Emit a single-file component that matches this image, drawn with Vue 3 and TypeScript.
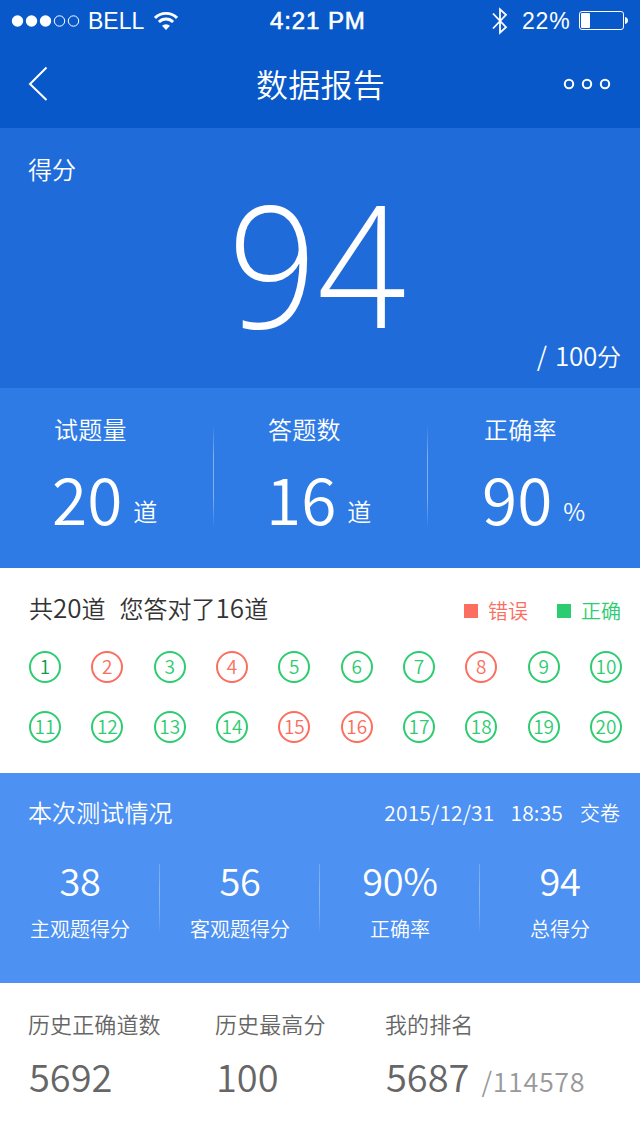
<script setup lang="ts">
interface Answer { n: number; wrong: boolean }
const wrongOnes = [2, 4, 8, 15, 16]
const answers: Answer[] = Array.from({ length: 20 }, (_, i) => ({ n: i + 1, wrong: wrongOnes.includes(i + 1) }))
const totals = [
  { label: '试题量', value: '20', unit: '道' },
  { label: '答题数', value: '16', unit: '道' },
  { label: '正确率', value: '90', unit: '%' },
]
const results = [
  { value: '38', label: '主观题得分' },
  { value: '56', label: '客观题得分' },
  { value: '90%', label: '正确率' },
  { value: '94', label: '总得分' },
]
const history = [
  { label: '历史正确道数', value: '5692', extra: '' },
  { label: '历史最高分', value: '100', extra: '' },
  { label: '我的排名', value: '5687', extra: '/114578' },
]
</script>

<template>
  <main class="screen">
    <header class="top">
      <div class="status">
        <svg class="signal" width="70" height="14" viewBox="0 0 70 14">
          <g fill="#fff"><circle cx="6.500" cy="7" r="5.700" /><circle cx="20.500" cy="7" r="5.700" /><circle cx="34.500" cy="7" r="5.700" /></g>
          <g fill="none" stroke="#fff" stroke-width="1"><circle cx="48.500" cy="7" r="5.200" /><circle cx="62.500" cy="7" r="5.200" /></g>
        </svg>
        <span class="carrier">BELL</span>
        <svg class="wifi" width="24" height="20" viewBox="0 0 24 20">
          <g fill="none" stroke="#fff" stroke-width="2.900">
            <path d="M1 6.900a15.600 15.600 0 0 1 22 0" /><path d="M4.900 10.900a10 10 0 0 1 14.200 0" />
          </g>
          <path d="M12 19l-4-4.200a5.800 5.800 0 0 1 8 0z" fill="#fff" />
        </svg>
        <span class="time">4:21 PM</span>
        <svg class="bt" width="16" height="28" viewBox="0 0 16 28">
          <path d="M1 6.500l13 13.600-6 5.600V2.300l6 5.600L1 21.500" fill="none" stroke="#fff" stroke-width="1.800" />
        </svg>
        <span class="percent">22%</span>
        <svg class="battery" width="50" height="20" viewBox="0 0 50 20">
          <rect x=".5" y=".5" width="44" height="18" rx="2.500" fill="none" stroke="#fff" />
          <rect x="2" y="2" width="9" height="15" rx="1" fill="#fff" />
          <path d="M46 6q3 .8 3 3.500T46 13z" fill="#fff" />
        </svg>
      </div>
      <nav class="nav">
        <svg width="80" height="40" viewBox="0 0 80 40"><path d="M46.500 3.500L30 20l16.500 16" fill="none" stroke="#fff" stroke-width="2" /></svg>
        <h1>数据报告</h1>
        <svg width="80" height="40" viewBox="0 0 80 40">
          <g fill="none" stroke="#fff" stroke-width="2"><circle cx="9" cy="20" r="4.200" /><circle cx="27" cy="20" r="4.200" /><circle cx="45" cy="20" r="4.200" /></g>
        </svg>
      </nav>
    </header>

    <section class="score">
      <div class="score-label">得分</div>
      <div class="score-num">94</div>
      <div class="score-max"><span>/</span><b>100</b>分</div>
    </section>

    <section class="totals">
      <div v-for="t in totals" :key="t.label" class="total">
        <div class="total-label">{{ t.label }}</div>
        <div class="total-row"><span class="total-value">{{ t.value }}</span><span class="total-unit">{{ t.unit }}</span></div>
      </div>
    </section>

    <section class="answers">
      <div class="answers-head">
        <div class="summary"><span>共<b>20</b>道</span><span>您答对了<b>16</b>道</span></div>
        <div class="legend">
          <span class="key wrong"><i></i>错误</span>
          <span class="key right"><i></i>正确</span>
        </div>
      </div>
      <div class="grid">
        <span v-for="a in answers" :key="a.n" class="dot" :class="{ wrong: a.wrong, current: a.n === 1 }"><b>{{ a.n }}</b></span>
      </div>
    </section>

    <section class="test">
      <div class="test-head">
        <h2>本次测试情况</h2>
        <div class="stamp"><span>2015/12/31</span><span>18:35</span><em>交卷</em></div>
      </div>
      <div class="results">
        <div v-for="r in results" :key="r.label" class="result">
          <div class="result-value">{{ r.value }}</div>
          <div class="result-label">{{ r.label }}</div>
        </div>
      </div>
    </section>

    <section class="history">
      <div v-for="h in history" :key="h.label" class="past">
        <div class="past-label">{{ h.label }}</div>
        <div class="past-row"><span>{{ h.value }}</span><small v-if="h.extra">{{ h.extra }}</small></div>
      </div>
    </section>
  </main>
</template>

<style>
body { margin: 0; }
</style>

<style scoped>
.screen { width: 640px; height: 1136px; overflow: hidden; background: #fff; color: #fff; font-family: "Noto Sans CJK SC", sans-serif; font-weight: 350; }
h1, h2 { margin: 0; font-weight: inherit; }
b, em, i { font-style: normal; font-weight: inherit; }
svg { display: block; flex: none; }

.top { height: 128px; background: #0958c9; }
.status { display: flex; align-items: center; height: 41px; font: 400 23px/40px "Liberation Sans", Arial, sans-serif; white-space: nowrap; }
.signal { margin-left: 11px; }
.carrier { width: 65px; margin-left: 7px; }
.wifi { margin-left: 1px; }
.time { width: 105px; margin-left: 92px; font-size: 24px; letter-spacing: .9px; -webkit-text-stroke: .6px #fff; }
.bt { margin-left: 117px; }
.percent { width: 56px; margin-left: 14px; letter-spacing: .8px; }
.battery { margin-left: 1px; }
.nav { display: flex; align-items: center; justify-content: space-between; height: 86px; }
.nav h1 { margin: -2px -1px 0 0; font-size: 32px; line-height: 44px; letter-spacing: .2px; }

.score { height: 260px; box-sizing: border-box; padding: 25px 19px 0 28px; background: #1e6bd9; }
.score-label { font-size: 24px; line-height: 32px; }
.score-num { margin: 18px 0 17px -15px; font: 300 169px/120px "Open Sans", "Noto Sans", sans-serif; text-align: center; transform: scaleX(.925); }
.score-max { text-align: right; font-size: 24px; line-height: 32px; }
.score-max span { margin-right: 8px; font-size: 26px; line-height: 1; }
.score-max b { font-size: 26px; line-height: 1; letter-spacing: -.3px; }

.totals { display: grid; grid-template-columns: 214px 214px 212px; height: 180px; background: #2f7be6; }
.total { padding: 25px 0 0 54px; background: linear-gradient(rgba(255,255,255,0), rgba(255,255,255,.4) 30%, rgba(255,255,255,.4) 70%, rgba(255,255,255,0)) right 37px / 1px 103px no-repeat; }
.total:last-child { padding-left: 56px; background: none; }
.total-label { font-size: 24px; line-height: 32px; letter-spacing: .2px; }
.total-row { display: flex; margin-top: 20px; margin-left: -2px; line-height: 64px; }
.total-value { font-size: 64px; }
.total-unit { margin: 30px 0 0 11px; font-size: 24px; line-height: 32px; }

.answers { height: 205px; box-sizing: border-box; padding: 24px 19px 0 29px; color: #333; }
.answers-head { display: flex; justify-content: space-between; line-height: 32px; }
.summary { display: flex; gap: 14px; font-size: 24px; }
.summary b { font-size: 26px; line-height: 1; }
.legend { display: flex; gap: 29px; height: 32px; padding-top: 3px; font-size: 20px; }
.key { display: flex; align-items: center; color: #2ecc71; }
.key i { width: 14px; height: 14px; margin: -1px 10px 0 0; background: currentColor; }
.key.wrong, .dot.wrong { color: #fc6e60; }
.grid { display: grid; grid-template-columns: repeat(10, 32px); justify-content: space-between; row-gap: 28px; margin: 24px -1px 0 0; }
.dot { box-sizing: border-box; height: 32px; border: 2px solid currentColor; border-radius: 50%; color: #2ecc71; font-size: 19px; line-height: 26px; display: flex; justify-content: center; }
.dot.current b { color: #109a4a; }

.test { height: 210px; box-sizing: border-box; padding-top: 23px; background: #4d91f2; }
.test-head { display: flex; justify-content: space-between; padding: 0 20px 0 28px; line-height: 32px; }
.test-head h2 { font-size: 24px; letter-spacing: .1px; }
.stamp { display: flex; font-size: 21px; letter-spacing: .15px; }
.stamp span { margin-right: 17px; }
.stamp span:first-child { margin-right: 16px; }
.stamp em { padding-top: 1px; font-size: 20px; letter-spacing: 0; }
.results { display: grid; grid-template-columns: repeat(4, 160px); margin-top: 31px; text-align: center; }
.result { background: linear-gradient(rgba(255,255,255,.2), rgba(255,255,255,.35) 40%, rgba(255,255,255,.25) 70%, rgba(255,255,255,0)) right 4px / 1px 70px no-repeat; }
.result:last-child { background: none; }
.result-value { font-size: 38px; line-height: 40px; letter-spacing: -.3px; }
.result-label { margin-top: 14px; font-size: 20px; line-height: 30px; }

.history { display: grid; grid-template-columns: 187px 170px 1fr; padding: 24px 0 0 28px; color: #666; }
.past-label { font-size: 22px; line-height: 32px; letter-spacing: .1px; }
.past-row { display: flex; align-items: baseline; margin: 17px 0 0 1px; font-size: 38px; line-height: 40px; }
.past-row small { margin-left: 12px; color: #999; font-size: 27px; letter-spacing: .6px; }
</style>
